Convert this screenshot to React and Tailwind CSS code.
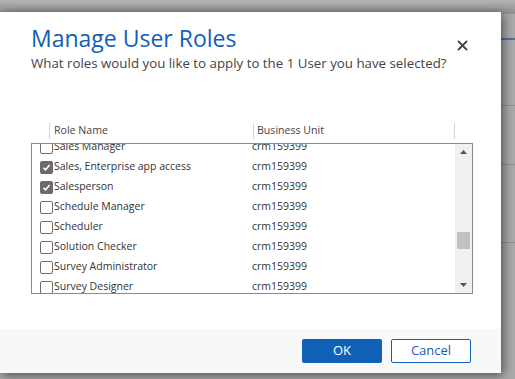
import { useState } from "react";

const roles = [
  { name: "Sales Manager", checked: false },
  { name: "Sales, Enterprise app access", checked: true },
  { name: "Salesperson", checked: true },
  { name: "Schedule Manager", checked: false },
  { name: "Scheduler", checked: false },
  { name: "Solution Checker", checked: false },
  { name: "Survey Administrator", checked: false },
  { name: "Survey Designer", checked: false },
];

function Check({ checked, onClick }) {
  return (
    <span
      onClick={onClick}
      className={`w-[13px] h-[13px] rounded-[2px] flex items-center justify-center shrink-0 cursor-pointer ${
        checked ? "bg-[#6b6b6b] border border-[#6b6b6b]" : "bg-white border border-[#6e6e6e]"
      }`}
    >
      {checked && (
        <svg width="9" height="9" viewBox="0 0 9 9">
          <path d="M1.5 4.8 L3.6 6.8 L7.6 2" stroke="white" strokeWidth="1.6" fill="none" />
        </svg>
      )}
    </span>
  );
}

export default function App() {
  const [list, setList] = useState(roles);
  const toggle = (i) =>
    setList((p) => p.map((r, j) => (j === i ? { ...r, checked: !r.checked } : r)));

  return (
    <div
      className="relative w-[515px] h-[379px] overflow-hidden bg-[#a9a9a9]"
      style={{ fontFamily: '"Segoe UI", "Open Sans", sans-serif' }}
    >
      {/* page behind the modal */}
      <div className="absolute inset-x-0 top-0 h-[14px] bg-gradient-to-b from-[#b4b4b4] to-[#8e8e8e]" />
      <div className="absolute left-[500px] right-0 top-[38px] h-[2px] bg-[#52709c]" />
      <div className="absolute left-[500px] right-0 top-[105px] h-px bg-[#8f8f8f]" />
      <div className="absolute left-[500px] right-0 top-[164px] h-px bg-[#8f8f8f]" />
      <div className="absolute left-[500px] right-0 top-[242px] h-px bg-[#8f8f8f]" />

      {/* dialog */}
      <div className="absolute left-0 top-[12px] w-[501px] h-[361px] bg-white flex flex-col shadow-[2px_2px_10px_rgba(0,0,0,0.55)]">
        <div className="flex-1 flex flex-col">
          <div className="flex items-start justify-between pl-[31px] pr-[33px] pt-[11px]">
            <div>
              <h1 className="text-[23px] leading-[30px] text-[#1160b7]">Manage User Roles</h1>
              <p className="text-[13.3px] leading-[18px] text-[#444444] mt-[1px]">
                What roles would you like to apply to the 1 User you have selected?
              </p>
            </div>
            <button className="mt-[17px] text-[#444444]">
              <svg width="11" height="11" viewBox="0 0 11 11">
                <path d="M1 1 L10 10 M10 1 L1 10" stroke="#444" strokeWidth="1.8" />
              </svg>
            </button>
          </div>

          {/* header */}
          <div className="flex mt-[51px] pl-[49px] h-[16px] items-center text-[10.6px] text-[#444444]">
            <div className="w-[204px] h-full border-l border-[#d6d6d6] pl-[4px] flex items-center">Role Name</div>
            <div className="w-[201px] h-full border-l border-[#d6d6d6] pl-[3px] flex items-center">Business Unit</div>
            <div className="h-full border-l border-[#d6d6d6]" />
          </div>

          {/* list */}
          <div className="ml-[31px] mt-[4px] w-[442px] h-[151px] border border-[#8a8a8a] flex overflow-hidden">
            <div className="flex-1 overflow-hidden">
              <div className="-mt-[7px]">
                {list.map((r, i) => (
                  <div key={r.name} className="h-[20px] flex items-center text-[10.5px] text-[#333333]">
                    <div className="w-[219px] pl-[8px] flex items-center gap-[1px]">
                      <Check checked={r.checked} onClick={() => toggle(i)} />
                      <span>{r.name}</span>
                    </div>
                    <div className="pl-[1px]">crm159399</div>
                  </div>
                ))}
              </div>
            </div>
            <div className="w-[17px] bg-[#f0f0f0] flex flex-col items-center justify-between py-[6px]">
              <svg width="7" height="4" viewBox="0 0 7 4">
                <path d="M0 4 L3.5 0 L7 4 Z" fill="#555" />
              </svg>
              <div className="flex-1 w-full flex flex-col pt-[78px]">
                <div className="mx-[2px] h-[17px] bg-[#c1c1c1]" />
              </div>
              <svg width="7" height="4" viewBox="0 0 7 4">
                <path d="M0 0 L7 0 L3.5 4 Z" fill="#555" />
              </svg>
            </div>
          </div>
        </div>

        {/* footer */}
        <div className="h-[44px] bg-[#f8f8f8] flex justify-end items-start gap-[9px] pr-[30px] pt-[10px]">
          <button className="w-[80px] h-[24px] bg-[#1160b7] rounded-[2px] text-white text-[13px]">OK</button>
          <button className="w-[80px] h-[24px] bg-white border border-[#1160b7] rounded-[2px] text-[#1160b7] text-[13px]">
            Cancel
          </button>
        </div>
      </div>
    </div>
  );
}
